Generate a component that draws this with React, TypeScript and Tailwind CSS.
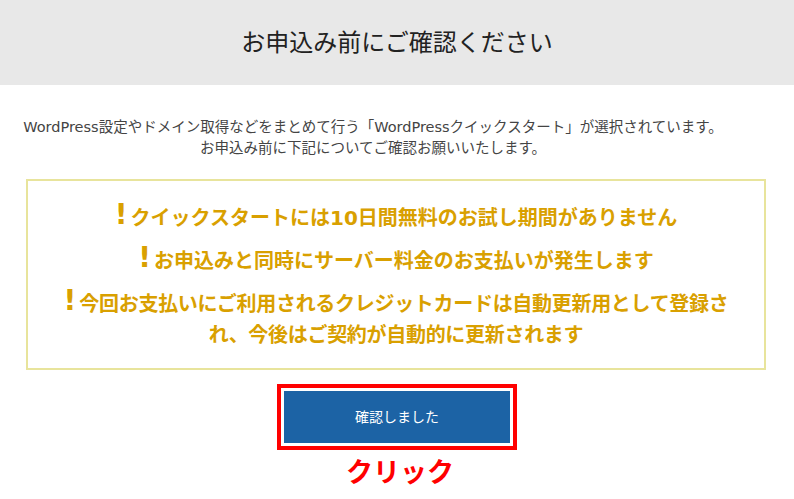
const jp = { fontFamily: '"DejaVu Sans", "Noto Sans CJK JP", sans-serif' }

function Notice({ children }: { children: React.ReactNode }) {
  return (
    <p className="leading-[31px]">
      <span className="mr-[3px] inline-block h-[20px] align-[1px] text-[28px] font-black leading-[20px]">!</span>
      {children}
    </p>
  )
}

export default function App() {
  return (
    <div className="w-[794px] h-[499px] bg-white overflow-hidden" style={jp}>
      <div className="h-[85px] bg-[#e8e8e8] flex items-center justify-center">
        <h1 className="text-[24px] text-[#222] font-normal">お申込み前にご確認ください</h1>
      </div>

      <div className="pt-[32px] pr-[48px] text-center text-[14.5px] leading-[21px] text-[#444]">
        <p>WordPress設定やドメイン取得などをまとめて行う「WordPressクイックスタート」が選択されています。</p>
        <p>お申込み前に下記についてご確認お願いいたします。</p>
      </div>

      <div className="mt-[20px] ml-[26px] w-[740px] border-2 border-[#e8e49c] pt-[22px] pb-[17px] text-center text-[20px] font-bold text-[#d9a000] flex flex-col gap-[12px]">
        <Notice>クイックスタートには10日間無料のお試し期間がありません</Notice>
        <Notice>お申込みと同時にサーバー料金のお支払いが発生します</Notice>
        <Notice>
          <span className="tracking-[-0.3px]">
            今回お支払いにご利用されるクレジットカードは自動更新用として登録さ
            <br />
            れ、今後はご契約が自動的に更新されます
          </span>
        </Notice>
      </div>

      <div className="mt-[14px] flex flex-col items-center">
        <div className="border-4 border-[#ff0000] p-[3px]">
          <button className="w-[226px] h-[52px] bg-[#1c63a5] text-white text-[14px]">確認しました</button>
        </div>
        <div className="mt-[5px] ml-[6px] text-[27px] font-bold leading-[36px] text-[#ff0000]">クリック</div>
      </div>
    </div>
  )
}
